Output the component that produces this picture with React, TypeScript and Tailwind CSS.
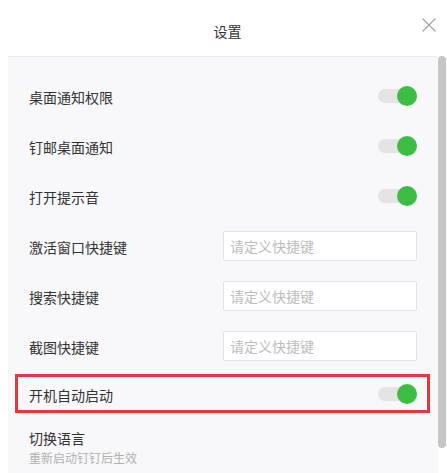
const font = "font-['Microsoft_YaHei','Noto_Sans_CJK_SC',sans-serif]";

function Toggle() {
  return (
    <div className="relative h-[20px] w-[39px] shrink-0">
      <div className="absolute left-0 top-[3px] h-[14px] w-[32px] rounded-full bg-[#e4e4e4]" />
      <div className="absolute right-0 top-0 h-[20px] w-[20px] rounded-full bg-[#3dbd44]" />
    </div>
  );
}

function ShortcutInput() {
  return (
    <input
      type="text"
      placeholder="请定义快捷键"
      className={`h-[30px] w-[194px] rounded-[2px] border border-[#e3e3e3] bg-white px-[6px] text-[14px] text-[#333] outline-none placeholder:text-[#bdbdbd] ${font}`}
    />
  );
}

function Row({ label, children }: { label: string; children: React.ReactNode }) {
  return (
    <div className="flex h-[50px] items-center justify-between px-[21px]">
      <span className="pt-[3px] text-[14px] text-[#333]">{label}</span>
      {children}
    </div>
  );
}

export default function App() {
  return (
    <div className={`flex h-[473px] w-[447px] flex-col overflow-hidden bg-white ${font}`}>
      <header className="relative flex h-[56px] shrink-0 items-center justify-center">
        <h1 className="pl-[8px] pt-[6px] text-[14px] text-[#333]">设置</h1>
        <button type="button" className="absolute right-[11px] top-[18px] text-[#a0a0a0]">
          <svg width="14" height="14" viewBox="0 0 14 14" fill="none" stroke="currentColor" strokeWidth="1.1">
            <path d="M0.5 0.5L13.5 13.5M13.5 0.5L0.5 13.5" />
          </svg>
        </button>
      </header>
      <div className="flex min-h-0 flex-1">
        <div className="ml-[8px] w-[430px] border-t border-[#ebebeb] bg-[#f8f8fa] pt-[14px]">
          <Row label="桌面通知权限">
            <Toggle />
          </Row>
          <Row label="钉邮桌面通知">
            <Toggle />
          </Row>
          <Row label="打开提示音">
            <Toggle />
          </Row>
          <Row label="激活窗口快捷键">
            <ShortcutInput />
          </Row>
          <Row label="搜索快捷键">
            <ShortcutInput />
          </Row>
          <Row label="截图快捷键">
            <ShortcutInput />
          </Row>
          <div className="flex h-[50px] flex-col justify-start pt-[3px]">
            <div className="ml-[7px] mr-[8px] flex h-[39px] items-center justify-between border-[3px] border-[#e5383d] pl-[11px] pr-[10px]">
              <span className="pt-[3px] text-[14px] text-[#333]">开机自动启动</span>
              <Toggle />
            </div>
          </div>
          <div className="flex flex-col px-[21px] pt-[6px]">
            <span className="text-[14px] leading-[22px] text-[#333]">切换语言</span>
            <span className="text-[12px] leading-[17px] text-[#b0b0b0]">重新启动钉钉后生效</span>
          </div>
        </div>
        <div className="w-[9px] pb-[25px]">
          <div className="h-full w-[8px] rounded-full bg-[#c6c6c6]" />
        </div>
      </div>
    </div>
  );
}
